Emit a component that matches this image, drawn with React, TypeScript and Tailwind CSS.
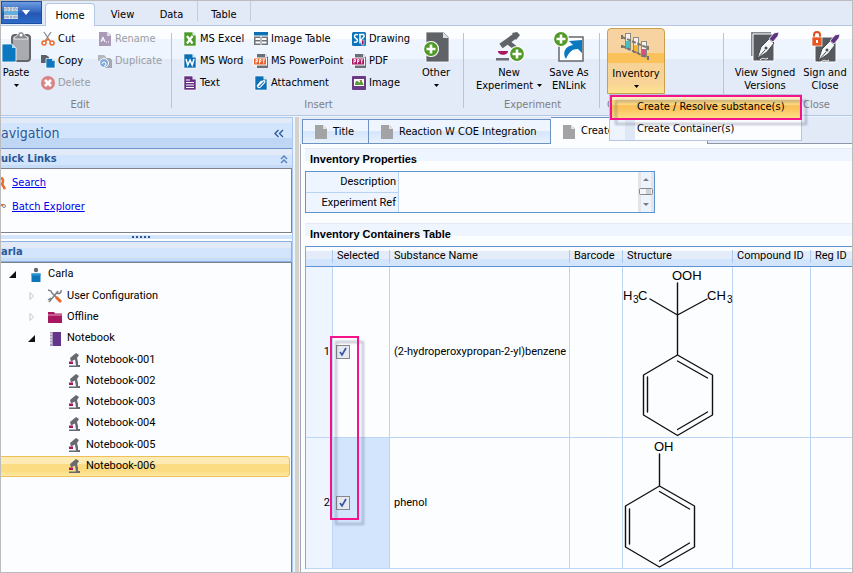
import React from "react";
import type { ReactNode } from "react";

const FONT = "font-['DejaVu_Sans_Condensed','DejaVu_Sans',sans-serif]";
const GRID_FONT = "font-[Roboto,sans-serif]";

/* ---------- small ribbon icons, 16 x 16 ---------- */

function Icon({ children, size = 16, view = "0 0 16 16" }: { children: ReactNode; size?: number; view?: string }) {
  return (
    <svg width={size} height={size} viewBox={view} className="shrink-0" aria-hidden="true">
      {children}
    </svg>
  );
}

const CutIcon = () => (
  <Icon>
    <path d="M4 1l6 9M11 1L5 10" stroke="#85878c" strokeWidth="1.2" fill="none" />
    <circle cx="4" cy="12" r="2" fill="none" stroke="#ee6c2b" strokeWidth="1.5" />
    <circle cx="12" cy="12" r="2" fill="none" stroke="#ee6c2b" strokeWidth="1.5" />
    <path d="M6 10l2-2 2 2" stroke="#ee6c2b" strokeWidth="1.5" fill="none" />
  </Icon>
);
const CopyIcon = () => (
  <Icon>
    <path d="M1 2h5l3 2v6H1z" fill="#5d6066" />
    <path d="M6 5.500h6l3 2V15H6z" fill="#0d76bd" stroke="#fff" strokeWidth=".7" />
    <path d="M12 5v3h3z" fill="#bfe0f5" />
  </Icon>
);
const DeleteIcon = () => (
  <Icon>
    <circle cx="8" cy="8" r="7" fill="#d98385" />
    <path d="M5 5l6 6M11 5l-6 6" stroke="#fff" strokeWidth="2.800" />
  </Icon>
);
const RenameIcon = () => (
  <Icon>
    <path d="M2 1h8l4 3v11H2z" fill="#a99ab9" />
    <path d="M10 1v4h4z" fill="#e5dfeb" />
    <path d="M4 11l2-5 2 5M4.500 9h3M9 11h1M11 11h1" stroke="#fff" fill="none" />
  </Icon>
);
const DuplicateIcon = () => (
  <Icon>
    <path d="M1 2h6l2 2v4H1z" fill="#b5b8bf" />
    <path d="M7 5h6l2 2v8H7z" fill="#a5a8b0" />
    <circle cx="7" cy="10" r="4.500" fill="#84aadb" stroke="#fff" />
    <path d="M5 11a2 2 0 1 1 2 2" stroke="#fff" fill="none" />
  </Icon>
);

function PageIcon({ fill, children }: { fill: string; children?: ReactNode }) {
  return (
    <Icon>
      <path d="M2 1h8.500L14 4.500V15H2z" fill={fill} stroke="#fff" strokeWidth=".6" />
      {children}
      <path d="M10.500 1v3.500H14z" fill="#e8eef6" />
    </Icon>
  );
}
const ExcelIcon = () => (
  <PageIcon fill="#4b9a2a">
    <path d="M5 5l5.500 7.500M10.500 5L5 12.500" stroke="#fff" strokeWidth="2.200" />
  </PageIcon>
);
const WordIcon = () => (
  <PageIcon fill="#0c70b6">
    <path d="M4 6l1.800 6L8 7l2.200 5L12 6" stroke="#fff" strokeWidth="1.500" fill="none" />
  </PageIcon>
);
const TextIcon = () => (
  <PageIcon fill="#653080">
    <path d="M4 5h4M4 7.500h8M4 10h8M4 12.500h8" stroke="#fff" strokeWidth="1.200" />
  </PageIcon>
);
const ImageTableIcon = () => (
  <Icon>
    <path d="M1 1h14v3.500H1z" fill="#0c70b6" />
    <path d="M1 5.500h14V14H1z" fill="#707379" />
    <path d="M2.500 7h4.500v2H2.500zM9 7h4.500v2H9zM2.500 10.500h4.500v2H2.500zM9 10.500h4.500v2H9z" fill="#fff" />
    <path d="M8 5v9" stroke="#fff" />
  </Icon>
);
function StampedPage({ fill }: { fill: string }) {
  return (
    <Icon>
      <path d="M4 1h8l3 3v11H4z" fill="#6c6f75" />
      <path d="M12 1v3h3z" fill="#e2e5ea" />
      <rect x="0.500" y="5" width="13" height="7" fill={fill} stroke="#fff" />
      <path d="M3 10.500v-4h1.500v2H3M6.500 10.500v-4H8v2H6.500M9.500 6.800h2.500M10.700 7v3.500" stroke="#fff" fill="none" strokeWidth=".9" />
    </Icon>
  );
}
const AttachmentIcon = () => (
  <PageIcon fill="#0c70b6">
    <path d="M5 11l5-5c1-1 2.500 0 1.700 1.300L7.500 11.800c-1.800 1.800-4.200-.3-2.500-2L8.500 6" stroke="#fff" fill="none" strokeWidth="1.200" />
  </PageIcon>
);
const DrawingIcon = () => (
  <Icon>
    <rect x="1" y="1" width="14" height="14" rx="1.500" fill="#0b73b8" />
    <path d="M7 4C4 2 2 6 5 7.500s1 4.500-2 3.500M8 3.500h4.500c1.500 2 0 3.500-2 4M9 3.500v9M10 8l1 4" stroke="#fff" fill="none" strokeWidth="1.500" />
    <path d="M10.500 9h2.500v5h-2.500z" fill="#a81760" stroke="#fff" strokeWidth=".6" />
  </Icon>
);
const PictureIcon = () => (
  <Icon>
    <rect x="1" y="1" width="14" height="14" rx="1" fill="#6b3a85" />
    <path d="M3 4h10v7H3z" fill="#fff" />
    <path d="M4 9c1-4 3-4 4-1l2-3 2.500 4v1H4z" fill="#5a9b34" />
    <path d="M8 5h3v2z" fill="#d2622e" />
  </Icon>
);

/* ---------- large ribbon icons, 32 x 32 ---------- */

const PlusBadge = ({ x, y }: { x: number; y: number }) => (
  <g>
    <circle cx={x} cy={y} r="7.500" fill="#519a27" stroke="#fff" strokeWidth="1.200" />
    <path d={`M${x - 4.5} ${y}h9M${x} ${y - 4.5}v9`} stroke="#fff" strokeWidth="2.600" />
  </g>
);
function BigIcon({ children }: { children: ReactNode }) {
  return (
    <Icon size={32} view="0 0 32 32">
      {children}
    </Icon>
  );
}
const PasteIcon = () => (
  <BigIcon>
    <rect x="12" y="4" width="18" height="26" rx="3" fill="#a9abb1" stroke="#63666b" strokeWidth="2" />
    <path d="M14 8c0-3 3-2 4-5s5-3 6 0 4 2 4 5z" fill="#85888e" stroke="#fff" strokeWidth=".8" />
    <circle cx="21" cy="4" r="1.500" fill="#fff" />
    <path d="M2 13h10l4 4v14H2z" fill="#0b79bf" stroke="#fff" strokeWidth=".8" />
    <path d="M12 13v4h4z" fill="#a9daf3" />
  </BigIcon>
);
const OtherIcon = () => (
  <BigIcon>
    <path d="M6 1h18l5 5v25H6z" fill="#5f6267" stroke="#fff" strokeWidth=".8" />
    <path d="M23 1v6h6z" fill="#dcdfe4" />
    <PlusBadge x={11} y={18} />
  </BigIcon>
);
const NewExperimentIcon = () => (
  <BigIcon>
    <path d="M8 15L22 5" stroke="#5f6267" strokeWidth="5.500" />
    <path d="M19 2l5-1 3 3-4 5z" fill="#5f6267" />
    <path d="M16 12l9 7" stroke="#5f6267" strokeWidth="4.500" fill="none" />
    <path d="M5 20h10c0 5-10 5-10 0z" fill="#a81760" />
    <path d="M3 27h13v2.500H3z" fill="#6b6e74" />
    <PlusBadge x={24} y={23} />
  </BigIcon>
);
const SaveLinkIcon = () => (
  <BigIcon>
    <path d="M6 6h24v24H6z" fill="#fff" stroke="#65686d" strokeWidth="1.500" />
    <path d="M13 28c-4-6-1-13 7-14l-4-4 13-1v13l-4-4c-6 0-9 3-12 10z" fill="#0b79bf" />
    <PlusBadge x={8} y={8} />
  </BigIcon>
);
const InventoryIcon = () => (
  <BigIcon>
    {[
      [8, 1, "#48c0bd"],
      [16, 5, "#f2b72c"],
      [24, 9, "#d0527d"],
    ].map(([x, y, c]) => (
      <g key={String(c)}>
        <path d={`M${x} ${y}v16`} stroke="#8d8983" strokeWidth="6" />
        <path d={`M${x} ${Number(y) + 1}v8`} stroke="#f4f1ee" strokeWidth="4" />
        <path d={`M${x} ${Number(y) + 8}v7`} stroke={String(c)} strokeWidth="4" />
      </g>
    ))}
    <path d="M2 5l26 11M2 14l26 12" stroke="#77746e" strokeWidth="2" strokeDasharray="4 1.500" />
    <path d="M2 3v4M2 13v3M28 14v4M28 24v4" stroke="#77746e" strokeWidth="2" />
  </BigIcon>
);
const PenShape = () => (
  <g>
    <path d="M8 28l4-12 8-8 5 4-7 9z" fill="#f5f6f8" stroke="#46494d" />
    <path d="M8 28l8-9" stroke="#46494d" />
    <circle cx="17" cy="17" r="1.500" fill="#46494d" />
    <path d="M20 8l5-6 5-1-1 4-5 6z" fill="#5d3483" stroke="#fff" strokeWidth=".8" />
    <path d="M11 29c4-4 5 1 8-2" stroke="#fff" fill="none" />
  </g>
);
const ViewSignedIcon = () => (
  <BigIcon>
    <path d="M2 1h20v24H2z" fill="#85888d" />
    <path d="M4 3h21v27H4z" fill="#56595e" stroke="#fff" />
    <PenShape />
  </BigIcon>
);
const SignCloseIcon = () => (
  <BigIcon>
    <path d="M6 6h21v25H6z" fill="#56595e" stroke="#fff" />
    <g transform="translate(1 2)">
      <PenShape />
    </g>
    <path d="M5 7V4c0-4 6-4 6 0v3" fill="none" stroke="#e24f1e" strokeWidth="2" />
    <rect x="3" y="6" width="10" height="9" fill="#e9541f" stroke="#fff" strokeWidth=".7" />
    <path d="M8 9v3" stroke="#fff" strokeWidth="2" />
  </BigIcon>
);

const DownArrow = () => (
  <svg width="5" height="3" viewBox="0 0 5 3" className="shrink-0" aria-hidden="true">
    <path d="M0 0h5L2.500 3z" fill="#000" />
  </svg>
);

/* ---------- ribbon ---------- */

function SmallButton({ icon, label, disabled }: { icon: ReactNode; label: string; disabled?: boolean }) {
  return (
    <button
      type="button"
      disabled={disabled}
      className="flex h-[22px] items-center gap-[2px] whitespace-nowrap disabled:text-[#9a9da3]"
    >
      {icon}
      {label}
    </button>
  );
}

function BigButton({ icon, lines, arrow, className = "" }: { icon: ReactNode; lines: string[]; arrow?: "inline" | "below"; className?: string }) {
  return (
    <button type="button" className={`flex h-[66px] shrink-0 flex-col items-center pt-[3px] leading-[13px] whitespace-nowrap ${className}`}>
      {icon}
      <span className="pt-[3px]">{lines[0]}</span>
      {arrow === "below" ? (
        <span className="flex h-[13px] items-center">
          <DownArrow />
        </span>
      ) : (
        <span className="flex items-center gap-1">
          {lines[1]}
          {arrow === "inline" && <DownArrow />}
        </span>
      )}
    </button>
  );
}

function Group({ label, className, children, labelClass = "text-center" }: { label: string; className: string; children: ReactNode; labelClass?: string }) {
  return (
    <section aria-label={label} className={`flex shrink-0 flex-col ${className}`}>
      <div className="flex h-[66px]">{children}</div>
      <div className={`h-[22px] leading-[22px] text-[#7c7f86] ${labelClass}`}>{label}</div>
    </section>
  );
}

const Divider = () => <div className="mt-[5px] h-[75px] w-px shrink-0 bg-[#b3c6e0]" />;

function Ribbon() {
  return (
    <div className="flex h-[90px] overflow-visible border-b border-[#b4c8e4] bg-[linear-gradient(#fbfdff_0_13px,#eff5fe_13px_33px,#e3eaf8_33px)] pt-[2px]">
      <Group label="Edit" className="w-[170px]" labelClass="pr-3 text-center">
        <BigButton icon={<PasteIcon />} lines={["Paste"]} arrow="below" className="w-[30px]" />
        <div className="ml-[9px] flex w-[57px] flex-col">
          <SmallButton icon={<CutIcon />} label="Cut" />
          <SmallButton icon={<CopyIcon />} label="Copy" />
          <SmallButton icon={<DeleteIcon />} label="Delete" disabled />
        </div>
        <div className="flex flex-col">
          <SmallButton icon={<RenameIcon />} label="Rename" disabled />
          <SmallButton icon={<DuplicateIcon />} label="Duplicate" disabled />
        </div>
      </Group>
      <Divider />
      <Group label="Insert" className="w-[291px] pl-[10px]" labelClass="pr-2 text-center">
        <div className="flex w-[71px] flex-col">
          <SmallButton icon={<ExcelIcon />} label="MS Excel" />
          <SmallButton icon={<WordIcon />} label="MS Word" />
          <SmallButton icon={<TextIcon />} label="Text" />
        </div>
        <div className="flex w-[98px] flex-col">
          <SmallButton icon={<ImageTableIcon />} label="Image Table" />
          <SmallButton icon={<StampedPage fill="#e5602a" />} label="MS PowerPoint" />
          <SmallButton icon={<AttachmentIcon />} label="Attachment" />
        </div>
        <div className="flex w-[64px] flex-col">
          <SmallButton icon={<DrawingIcon />} label="Drawing" />
          <SmallButton icon={<StampedPage fill="#a81760" />} label="PDF" />
          <SmallButton icon={<PictureIcon />} label="Image" />
        </div>
        <BigButton icon={<OtherIcon />} lines={["Other"]} arrow="below" className="w-[42px]" />
      </Group>
      <Divider />
      <Group label="Experiment" className="w-[135px] pl-[10px]" labelClass="pr-2 text-center">
        <BigButton icon={<NewExperimentIcon />} lines={["New", "Experiment"]} arrow="inline" className="w-[70px]" />
        <BigButton icon={<SaveLinkIcon />} lines={["Save As", "ENLink"]} className="w-[50px]" />
      </Group>
      <Divider />
      <Group label="C" className="w-[123px] pl-[7px]" labelClass="text-left">
        <InventoryMenu />
      </Group>
      <Divider />
      <Group label="Close" className="w-[128px] pl-2" labelClass="pl-[71px] text-left">
        <BigButton icon={<ViewSignedIcon />} lines={["View Signed", "Versions"]} className="w-[66px]" />
        <BigButton icon={<SignCloseIcon />} lines={["Sign and", "Close"]} className="w-[54px]" />
      </Group>
    </div>
  );
}

function InventoryMenu() {
  return (
    <div className="relative">
      <BigButton
        icon={<InventoryIcon />}
        lines={["Inventory"]}
        arrow="below"
        className="w-[58px] rounded-t-sm border border-[#c8a04e] bg-[linear-gradient(#f6d3a0_0_24px,#fbc25c_24px_34px,#f8d397_34px_54px,#fde58e)]"
      />
      <div role="menu" className="absolute top-full left-[2px] z-20 flex w-[193px] flex-col border border-[#b4c6e2] bg-[linear-gradient(90deg,#eef4fd_0_15px,#e1e8f5_15px_25px,#fcfdff_25px)]">
        <button
          type="button"
          role="menuitem"
          className="h-[24px] bg-[linear-gradient(#fff0c4_0_5px,#fcd77f_5px_10px,#fbc25c_10px_13px,#fde08a)] pl-[27px] text-left"
        >
          Create / Resolve substance(s)
        </button>
        <button type="button" role="menuitem" className="h-[21px] pl-[27px] text-left">
          Create Container(s)
        </button>
        <div className="pointer-events-none absolute top-0 left-0 h-[25px] w-[192px] border-2 border-[#f5128b] drop-shadow-[5px_5px_1px_rgba(70,80,110,0.35)]" />
      </div>
    </div>
  );
}

function TabBar() {
  return (
    <nav className="flex h-[25px] border-b border-[#b4c8e4] bg-[#e2e9f7]">
      <button type="button" aria-label="Application menu" className="flex h-[23px] w-[41px] items-center gap-1 border border-[#1c4fa0] bg-[linear-gradient(#6d9ce0,#3568c0_45%,#2557b2_55%,#2c6ccb)] pl-[2px]">
        <svg width="14" height="14" viewBox="0 0 14 14" aria-hidden="true">
          <path d="M0 1h14v12H0z" fill="#d5dbe4" />
          <path d="M0 5h14v4H0z" fill="#5cb2e4" />
          <path d="M0 3h14M0 11h14M3 1v12M7 1v12M11 1v12" stroke="#8f9cae" strokeDasharray="2 1" />
        </svg>
        <svg width="8" height="5" viewBox="0 0 8 5" aria-hidden="true">
          <path d="M0 0h8L4 5z" fill="#fff" />
        </svg>
      </button>
      <button type="button" className="mt-[2px] -mb-px ml-[3px] w-[50px] rounded-t border border-b-0 border-[#b4c8e4] bg-[#fbfdff] pt-[3px]">
        Home
      </button>
      <button type="button" className="w-[55px] pt-[5px]">View</button>
      <button type="button" className="w-[47px] pt-[5px] pr-1 text-center">Data</button>
      <span className="h-5 w-px bg-[#c3cddd]" />
      <button type="button" className="w-[52px] pt-[5px]">Table</button>
      <span className="h-5 w-px bg-[#c3cddd]" />
    </nav>
  );
}

/* ---------- navigation panel ---------- */

const PANEL_HEAD = "bg-[linear-gradient(#e2eaf8_0_33%,#d2e5fd_33%_85%,#c6dcf9_85%)] pt-px";

const Microscope = () => (
  <Icon>
    <path d="M4 6l6-5 3 2-2 3 1 4v3h2v2H3v-1.500h7l-1-6-4 2z" fill="#66696f" />
    <path d="M3 9.500h4v2.500H3z" fill="#a81760" />
  </Icon>
);
const UserIcon = () => (
  <Icon>
    <circle cx="8" cy="3" r="2.200" fill="#65686e" />
    <path d="M3.500 6.500h9V15h-9z" fill="#0c76bb" />
    <path d="M3.500 6.500h9v2h-9z" fill="#2c95d0" />
  </Icon>
);
const ToolsIcon = () => (
  <Icon>
    <path d="M1 2l3 1 1 2 7 7M11 3L8 7M14 2c1 3-2 4-4 3M2 14l5-6M1 12l3-2" stroke="#7c7f85" strokeWidth="1.500" fill="none" />
    <path d="M9 9l5 5" stroke="#ea6a2a" strokeWidth="3" />
  </Icon>
);
const FolderIcon = () => (
  <Icon>
    <path d="M1 3h6l1 1.500h7V14H1z" fill="#a81760" />
    <path d="M1 6h14" stroke="#e4a2c3" />
  </Icon>
);
const BookIcon = () => (
  <Icon>
    <path d="M3 1h11v14H3z" fill="#65358b" />
    <path d="M3 1h3v14H3z" fill="#a794bb" />
    <path d="M2 3h3M2 6h3M2 9h3M2 12h3" stroke="#fff" />
  </Icon>
);

function Expander({ open }: { open: boolean }) {
  return (
    <svg width="8" height="8" viewBox="0 0 8 8" className="shrink-0" aria-hidden="true">
      {open ? <path d="M0 7h7V0z" fill="#111" /> : <path d="M2 .5L5.500 4 2 7.500z" fill="#fff" stroke="#c2c4c8" />}
    </svg>
  );
}

const notebooks = ["Notebook-001", "Notebook-002", "Notebook-003", "Notebook-004", "Notebook-005", "Notebook-006"];

function Branch({ open, icon, label, className }: { open: boolean; icon: ReactNode; label: string; className: string }) {
  return (
    <li role="treeitem" aria-expanded={open} className={`flex items-center ${className}`}>
      <Expander open={open} />
      <span className="ml-[11px] flex items-center gap-1">
        {icon}
        {label}
      </span>
    </li>
  );
}

function Navigation() {
  return (
    <aside className="flex w-[292px] shrink-0 flex-col border-t border-r border-[#a9c8f2] bg-[#fcfdff]">
      <header className="flex h-[31px] shrink-0 items-center justify-between border-b border-[#6d95cc] bg-[linear-gradient(#e2eaf8_0_5px,#d2e5fd_5px_20px,#bfd6f4_20px)] pr-2 text-[#2b5797]">
        <h2 className="text-sm">avigation</h2>
        <button type="button" aria-label="Collapse panel">
          <svg width="10" height="9" viewBox="0 0 10 9" fill="none" stroke="#2b5797" strokeWidth="1.300" aria-hidden="true">
            <path d="M4.500 1L1 4.500 4.500 8M9 1L5.500 4.500 9 8" />
          </svg>
        </button>
      </header>
      <header className={`flex h-[19px] shrink-0 items-center justify-between pr-1 text-[#2b5797] ${PANEL_HEAD}`}>
        <h3 className="font-bold">uick Links</h3>
        <svg width="8" height="9" viewBox="0 0 8 9" fill="none" stroke="#5d86c0" strokeWidth="1.500" aria-hidden="true">
          <path d="M1 4l3-3 3 3M1 8l3-3 3 3" />
        </svg>
      </header>
      <ul className="h-[65px] shrink-0 border border-l-0 border-[#7d828c] pt-[2px] text-[#0000ee] underline">
        <li className="flex h-6 items-center gap-[6px]">
          <svg width="5" height="14" viewBox="0 0 5 14" aria-hidden="true">
            <path d="M0 2c3 1 2 5 1 6l3 5" stroke="#ea6a2a" strokeWidth="2.500" fill="none" />
          </svg>
          <a href="#search">Search</a>
        </li>
        <li className="flex h-6 items-center gap-[6px]">
          <svg width="5" height="14" viewBox="0 0 5 14" aria-hidden="true">
            <circle cx="3" cy="6" r="1.500" stroke="#808388" fill="#fff" />
            <path d="M0 5h2" stroke="#ea6a2a" strokeWidth="2" />
          </svg>
          <a href="#batch">Batch Explorer</a>
        </li>
      </ul>
      <div className="my-[2px] flex h-1 shrink-0 items-center justify-center gap-[2px] bg-[#d2e5fd] pr-3">
        {[0, 1, 2, 3, 4].map((n) => (
          <span key={n} className="size-[2px] bg-[#2b5797]" />
        ))}
      </div>
      <header className={`flex h-[21px] shrink-0 items-center border border-l-0 border-[#8bb1e4] text-[#2b5797] ${PANEL_HEAD}`}>
        <h3 className="font-bold">arla</h3>
      </header>
      <div className={`flex-1 border-t border-r border-[#7d828c] pt-px pr-px ${GRID_FONT}`}>
        <ul role="tree" className="grid h-[213px] auto-rows-fr">
          <Branch open icon={<UserIcon />} label="Carla" className="pl-2" />
          <Branch open={false} icon={<ToolsIcon />} label="User Configuration" className="pl-[27px]" />
          <Branch open={false} icon={<FolderIcon />} label="Offline" className="pl-[27px]" />
          <Branch open icon={<BookIcon />} label="Notebook" className="pl-[27px]" />
          {notebooks.map((name) => (
            <li
              key={name}
              role="treeitem"
              className="flex items-center gap-1 border border-l-0 border-transparent pl-[65px] last:rounded-r-sm last:border-[#f0c057] last:bg-[linear-gradient(#fdebb5_0_7px,#fbdc82_7px_14px,#fde9a4)]"
            >
              <Microscope />
              {name}
            </li>
          ))}
        </ul>
      </div>
    </aside>
  );
}

/* ---------- document area ---------- */

const DocTabIcon = () => (
  <svg width="12" height="14" viewBox="0 0 12 14" className="shrink-0" aria-hidden="true">
    <path d="M0 0h8l4 4v10H0z" fill="#a3a3a5" />
    <path d="M8 0v4h4z" fill="#e1e2e5" />
  </svg>
);

const DOC_TAB = "flex items-center gap-[6px] whitespace-nowrap pt-px pl-3";
const IDLE_TAB = "mt-[2px] border-y border-r border-[#6f92c4] bg-[linear-gradient(#eef5fe_0_11px,#d8e8fc_11px_14px,#e9f2fe)]";

function DocTabs() {
  return (
    <div role="tablist" className="flex h-[27px] shrink-0 bg-[#e2e9f7] pl-[2px]">
      <button type="button" role="tab" className={`${DOC_TAB} ${IDLE_TAB} w-[67px] border-l`}>
        <DocTabIcon />
        Title
      </button>
      <button type="button" role="tab" className={`${DOC_TAB} ${IDLE_TAB} w-[182px]`}>
        <DocTabIcon />
        Reaction W COE Integration
      </button>
      <button type="button" role="tab" aria-selected className={`${DOC_TAB} w-[157px] border-t border-r border-[#6f92c4] bg-[#fcfdff]`}>
        <DocTabIcon />
        Create
      </button>
      <span className="flex-1 border-b border-[#8d96ab]" />
    </div>
  );
}

function SectionTitle({ children }: { children: ReactNode }) {
  return (
    <h2 className="h-[23px] border-t border-[#e4eaf4] bg-[linear-gradient(#eef5ff_0_12px,transparent_12px)] pl-[5px] font-['Liberation_Sans',Arial,sans-serif] leading-5 font-bold">
      {children}
    </h2>
  );
}

function Field({ id, label }: { id: string; label: string }) {
  return (
    <div className="flex h-[21px] border-b border-[#b9d4f3] last:h-[19px] last:border-b-0">
      <label htmlFor={id} className="w-[93px] border-r border-[#b9d4f3] bg-[#eff5ff] pr-[2px] text-right leading-5">
        {label}
      </label>
      <input id={id} className="min-w-0 flex-1 bg-[#fcfdff] px-1 outline-none" />
    </div>
  );
}

function Properties() {
  return (
    <div className={`flex w-[350px] border border-[#5f93cf] ${GRID_FONT}`}>
      <div className="min-w-0 flex-1 [&>div:first-child_input]:-mb-px">
        <Field id="description" label="Description" />
        <Field id="experiment-ref" label="Experiment Ref" />
      </div>
      <svg width="16" height="40" viewBox="0 0 16 40" aria-hidden="true">
        <path d="M0 0h16v40H0z" fill="#e3e4e7" />
        <path d="M3 0h10v40H3z" fill="#edf3fc" />
        <path d="M5 9h6L8 6zM5 31h6l-3 3z" fill="#797c82" />
        <rect x="1.500" y="16.500" width="13" height="6" rx="1" fill="#f4f5f7" stroke="#85888f" />
        <path d="M8 17h5v5H8z" fill="#cfd1d5" />
      </svg>
    </div>
  );
}

function Bonds({ d }: { d: string }) {
  return <path d={d} fill="none" stroke="#111" strokeWidth="1.400" strokeLinecap="round" strokeLinejoin="round" />;
}

const ATOM = "font-['Liberation_Sans',Arial,sans-serif] text-[13px]";
const SUBSCRIPT = "font-['Liberation_Sans',Arial,sans-serif] text-[10px]";

const CumeneHydroperoxide = () => (
  <svg width="109" height="170" viewBox="0 1 109 170" className="block overflow-visible" role="img" aria-label="Structure 1">
    <Bonds d="M54.500 17v72M54.500 49L27 33M54.500 49L84 33M54.500 89L89.500 109v40L54.500 169.500 20.500 149v-40zM54.500 95L84.500 112M54.500 163.500L84.500 146M24.500 111v35" />
    <text x="49" y="14" className={ATOM}>OOH</text>
    <text x="0" y="34" className={ATOM}>H</text>
    <text x="10" y="37" className={SUBSCRIPT}>3</text>
    <text x="15" y="34" className={ATOM}>C</text>
    <text x="84" y="34" className={ATOM}>CH</text>
    <text x="104" y="37" className={SUBSCRIPT}>3</text>
  </svg>
);

const Phenol = () => (
  <svg width="109" height="130" viewBox="0 0 109 130" className="block overflow-visible" role="img" aria-label="Structure 2">
    <Bonds d="M36.500 16v32M36.500 48L71.500 68v41L36.500 129 2.500 109V68zM36.500 53.500L66.500 71M36.500 123L66.500 105M6.500 71v35" />
    <text x="31" y="13" className={ATOM}>OH</text>
  </svg>
);

const headings = ["", "Selected", "Substance Name", "Barcode", "Structure", "Compound ID", "Reg ID"];
const rows = [
  { name: "(2-hydroperoxypropan-2-yl)benzene", drawing: <CumeneHydroperoxide />, height: "h-[171px]", tint: "" },
  { name: "phenol", drawing: <Phenol />, height: "h-[131px]", tint: "bg-[#d2e5fd]" },
];

function Containers() {
  const cell = "border-r border-b border-[#bcd5f5]";
  return (
    <div className={`relative ${GRID_FONT}`}>
      <table className="w-full table-fixed border-separate border-spacing-0 border-l border-[#7fabdf] text-left">
        <colgroup>
          <col className="w-[27px]" />
          <col className="w-[57px]" />
          <col className="w-[180px]" />
          <col className="w-[53px]" />
          <col className="w-[110px]" />
          <col className="w-[78px]" />
          <col />
        </colgroup>
        <thead>
          <tr>
            {headings.map((h) => (
              <th
                key={h}
                className="h-[21px] border-y border-[#5f93cf] bg-[linear-gradient(#fbfdff_0_4px,#e4ecf9_4px_12px,#d2e5fd_12px)] p-0 font-normal whitespace-nowrap"
              >
                <div className={`-ml-px flex h-[13px] items-center pl-1 ${h ? "border-l border-[#a9cbf2]" : ""}`}>{h}</div>
              </th>
            ))}
          </tr>
        </thead>
        <tbody>
          {rows.map((row, i) => (
            <tr key={row.name} className={row.height}>
              <td className={`${cell} bg-[#eff5ff] p-0 pr-[2px] text-right`}>{i + 1}</td>
              <td className={`${cell} ${row.tint} p-0 pl-[3px]`}>
                <label className="grid size-[14px] place-items-center">
                  <input
                    type="checkbox"
                    defaultChecked
                    aria-label={`Select ${row.name}`}
                    className="col-start-1 row-start-1 size-[14px] appearance-none border border-[#85888f] bg-[#e6eaf0]"
                  />
                  <svg width="10" height="10" viewBox="0 0 10 10" className="pointer-events-none col-start-1 row-start-1" aria-hidden="true">
                    <path d="M2 5l2 3 4-7" stroke="#3556a5" strokeWidth="1.700" fill="none" />
                  </svg>
                </label>
              </td>
              <td className={`${cell} p-0 pl-1 whitespace-nowrap`}>{row.name}</td>
              <td className={cell} />
              <td className={`${cell} p-0 align-top`}>{row.drawing}</td>
              <td className={cell} />
              <td className="border-b border-[#bcd5f5]" />
            </tr>
          ))}
        </tbody>
      </table>
      <div className="pointer-events-none absolute top-[90px] left-[25px] h-[184px] w-[29px] border-2 border-[#f5128b] drop-shadow-[5px_5px_1px_rgba(70,80,110,0.35)]" />
    </div>
  );
}

export default function App() {
  return (
    <div className={`flex h-screen flex-col overflow-hidden border border-[#bcbcbc] bg-[#eef4fd] text-[11px] text-black ${FONT}`}>
      <TabBar />
      <Ribbon />
      <div className="flex min-h-0 flex-1 pt-px">
        <Navigation />
        <div className="ml-[2px] w-1 shrink-0 bg-[#d4d2cb]" />
        <main className="ml-px flex min-w-0 flex-1 flex-col">
          <DocTabs />
          <div className="flex-1 border-l border-[#a4a9b8] bg-[#fcfdff] pt-1 pl-1">
            <SectionTitle>Inventory Properties</SectionTitle>
            <Properties />
            <div className="h-[10px]" />
            <SectionTitle>Inventory Containers Table</SectionTitle>
            <Containers />
          </div>
        </main>
      </div>
    </div>
  );
}
